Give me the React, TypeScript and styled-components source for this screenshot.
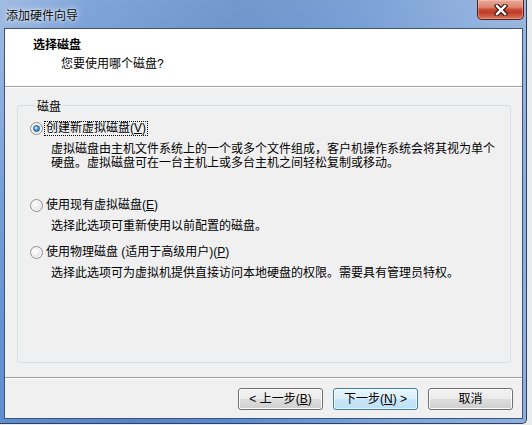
import React from "react";
import styled, { createGlobalStyle } from "styled-components";

const GlobalStyle = createGlobalStyle`
  html, body { margin: 0; padding: 0; }
  body {
    background: #e9eaec;
    font-family: "Liberation Sans", "Noto Sans CJK SC", sans-serif;
    font-size: 12px;
    color: #000;
  }
  * { box-sizing: border-box; }
`;

const Window = styled.div`
  width: 527px;
  height: 424px;
  display: flex;
  flex-direction: column;
  border-right: 1px solid #2c4262;
  border-bottom: 1px solid #2c4262;
  border-bottom-right-radius: 5px;
  background:
    linear-gradient(105deg,
      rgba(255,255,255,0.30) 0%,
      rgba(255,255,255,0.05) 14%,
      rgba(0,20,60,0.06) 38%,
      rgba(255,255,255,0.0) 55%,
      rgba(255,255,255,0.22) 78%,
      rgba(255,255,255,0.32) 100%),
    linear-gradient(180deg, #7aa0d6 0%, #5f8fd2 45%, #5a8ad0 100%);
`;

const TitleBar = styled.div`
  height: 28px;
  display: flex;
  align-items: flex-start;
  padding-left: 6px;
`;

const TitleText = styled.div`
  padding-top: 8px;
  line-height: 14px;
  font-size: 12px;
  font-family: "Noto Sans CJK SC", sans-serif;
  color: #0a0a0a;
  text-shadow: 0 0 6px rgba(255,255,255,0.9), 0 0 3px rgba(255,255,255,0.8);
`;

const CloseButton = styled.div`
  margin-left: auto;
  margin-right: 2px;
  width: 47px;
  height: 20px;
  display: flex;
  align-items: center;
  justify-content: center;
  border: 1px solid #5b1e15;
  border-top: none;
  border-radius: 0 0 5px 5px;
  background: linear-gradient(180deg, #eaa898 0%, #dc8571 38%, #c84a32 50%, #bf3b27 66%, #d8765e 100%);
  box-shadow: inset 0 0 0 1px rgba(255,220,210,0.35);
`;

const Client = styled.div`
  flex: 1;
  margin: 0 3px 4px 4px;
  border: 1px solid #3c5577;
  background: #f0f0f0;
  display: flex;
  flex-direction: column;
`;

const Header = styled.div`
  height: 58px;
  background: #fff;
  border-bottom: 1px solid #a0a0a0;
  padding: 8px 0 0 28px;
`;

const HeaderTitle = styled.div`
  font-weight: bold;
  line-height: 16px;
`;

const HeaderSub = styled.div`
  margin: 3px 0 0 28px;
  line-height: 16px;
`;

const Body = styled.div`
  flex: 1;
  border-top: 1px solid #fff;
  display: flex;
  flex-direction: column;
  padding: 0 11px 0 12px;
`;

const Group = styled.fieldset`
  flex: 1;
  margin: 9px 0 14px 0;
  padding: 7px 0 0 12px;
  border: 1px solid #d5dfe5;
  border-radius: 3px;
  min-width: 0;
`;

const Legend = styled.legend`
  margin-left: 5px;
  padding: 4px 2px 0 2px;
  line-height: 12px;
`;

const Option = styled.div<{ $after: number }>`
  display: flex;
  flex-direction: column;
  margin-bottom: ${(p) => p.$after}px;
`;

const RadioRow = styled.div`
  height: 16px;
  display: flex;
  align-items: center;
`;

const RadioCircle = styled.span`
  width: 13px;
  height: 13px;
  border-radius: 50%;
  border: 1px solid #8e8f8f;
  background: radial-gradient(circle at 40% 38%, #ffffff 0%, #eeeeee 45%, #d2d4d7 100%);
  box-shadow: inset 0 0 0 1px #f7f7f7;
  display: flex;
  align-items: center;
  justify-content: center;
  flex-shrink: 0;
`;

const RadioDot = styled.span`
  width: 7px;
  height: 7px;
  border-radius: 50%;
  border: 1px solid #1d4f80;
  background: radial-gradient(circle at 38% 35%, #d6f0ff 0%, #56aee6 40%, #1b64a6 100%);
`;

const RadioLabel = styled.span<{ $focused?: boolean }>`
  margin-left: 1px;
  padding: 0 1px;
  line-height: 13px;
  white-space: nowrap;
  border: 1px dotted ${(p) => (p.$focused ? "#000" : "transparent")};
`;

const Desc = styled.div`
  margin: 6px 0 0 21px;
  line-height: 14px;
  white-space: nowrap;
`;

const Footer = styled.div`
  border-top: 1px solid #a0a0a0;
  box-shadow: inset 0 1px 0 #ffffff;
  padding: 10px 9px 8px 0;
  display: flex;
  justify-content: flex-end;
  gap: 10px;
`;

const Button = styled.div<{ $default?: boolean }>`
  width: 85px;
  height: 22px;
  display: flex;
  align-items: center;
  justify-content: center;
  border-radius: 3px;
  line-height: 14px;
  white-space: nowrap;
  border: 1px solid ${(p) => (p.$default ? "#3c7fb1" : "#707070")};
  background: ${(p) =>
    p.$default
      ? "linear-gradient(180deg, #e8f5fd 0%, #d9eefb 50%, #c8e6f8 50%, #bfe0f5 100%)"
      : "linear-gradient(180deg, #f2f2f2 0%, #ebebeb 50%, #dddddd 50%, #cfcfcf 100%)"};
  box-shadow: inset 0 0 0 1px ${(p) => (p.$default ? "rgba(255,255,255,0.7)" : "#fcfcfc")};
`;

const CloseIcon = () => (
  <svg width="14" height="12" viewBox="0 0 14 12">
    <path d="M3 2 L11 10 M11 2 L3 10" stroke="#3a1510" strokeWidth="4.6" strokeLinecap="square" fill="none" />
    <path d="M3 2 L11 10 M11 2 L3 10" stroke="#ffffff" strokeWidth="2.4" strokeLinecap="square" fill="none" />
  </svg>
);

export default function App() {
  return (
    <>
      <GlobalStyle />
      <Window>
        <TitleBar>
          <TitleText>添加硬件向导</TitleText>
          <CloseButton>
            <CloseIcon />
          </CloseButton>
        </TitleBar>
        <Client>
          <Header>
            <HeaderTitle>选择磁盘</HeaderTitle>
            <HeaderSub>您要使用哪个磁盘?</HeaderSub>
          </Header>
          <Body>
            <Group>
              <Legend>磁盘</Legend>
              <Option $after={27}>
                <RadioRow>
                  <RadioCircle>
                    <RadioDot />
                  </RadioCircle>
                  <RadioLabel $focused>
                    创建新虚拟磁盘(<u>V</u>)
                  </RadioLabel>
                </RadioRow>
                <Desc>
                  虚拟磁盘由主机文件系统上的一个或多个文件组成，客户机操作系统会将其视为单个
                  <br />
                  硬盘。虚拟磁盘可在一台主机上或多台主机之间轻松复制或移动。
                </Desc>
              </Option>
              <Option $after={11}>
                <RadioRow>
                  <RadioCircle />
                  <RadioLabel>
                    使用现有虚拟磁盘(<u>E</u>)
                  </RadioLabel>
                </RadioRow>
                <Desc>选择此选项可重新使用以前配置的磁盘。</Desc>
              </Option>
              <Option $after={0}>
                <RadioRow>
                  <RadioCircle />
                  <RadioLabel>
                    使用物理磁盘 (适用于高级用户)(<u>P</u>)
                  </RadioLabel>
                </RadioRow>
                <Desc>选择此选项可为虚拟机提供直接访问本地硬盘的权限。需要具有管理员特权。</Desc>
              </Option>
            </Group>
          </Body>
          <Footer>
            <Button>
              &lt; 上一步(<u>B</u>)
            </Button>
            <Button $default>
              下一步(<u>N</u>) &gt;
            </Button>
            <Button>取消</Button>
          </Footer>
        </Client>
      </Window>
    </>
  );
}
